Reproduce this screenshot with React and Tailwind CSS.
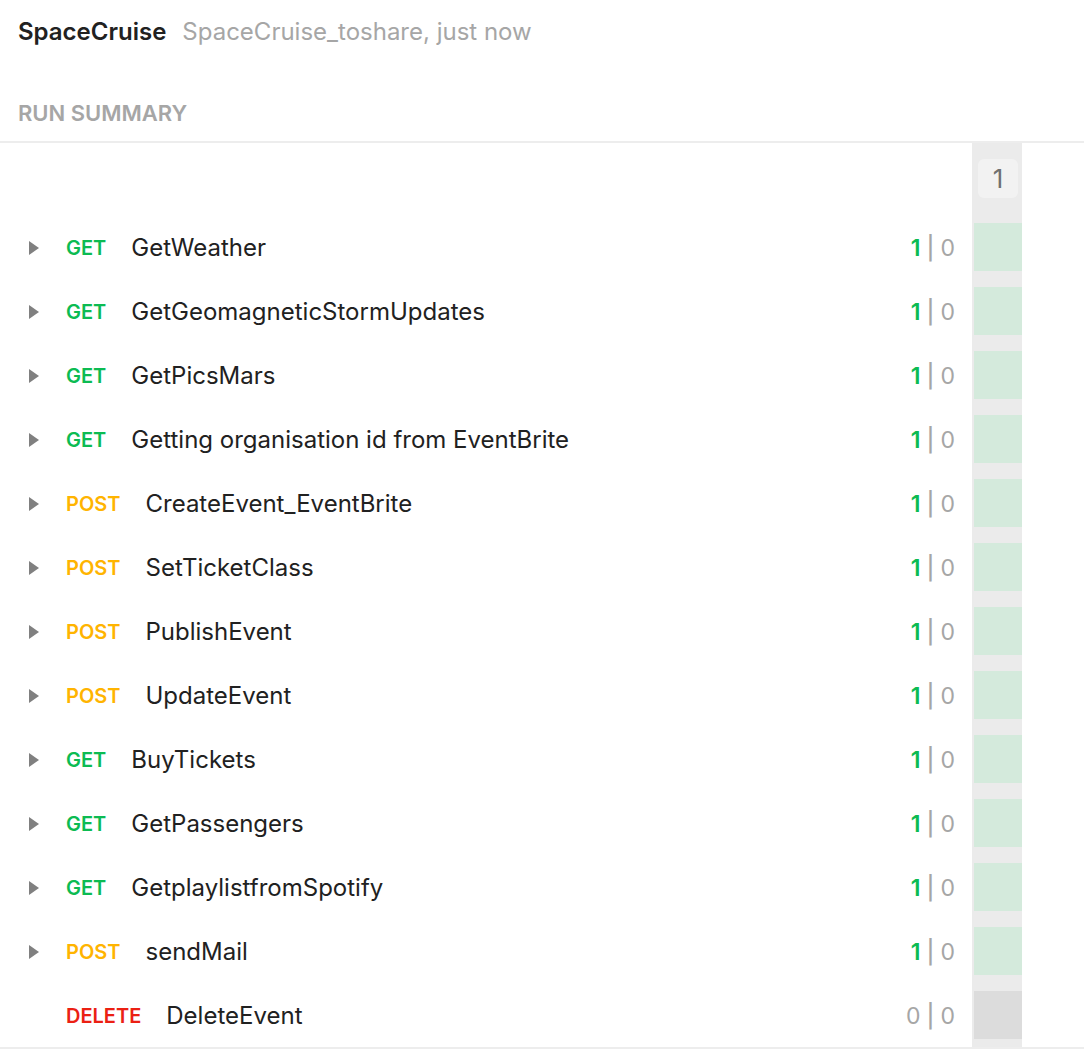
import React from 'react';

const requests = [
  { method: 'GET', name: 'GetWeather', pass: 1, fail: 0 },
  { method: 'GET', name: 'GetGeomagneticStormUpdates', pass: 1, fail: 0 },
  { method: 'GET', name: 'GetPicsMars', pass: 1, fail: 0 },
  { method: 'GET', name: 'Getting organisation id from EventBrite', pass: 1, fail: 0 },
  { method: 'POST', name: 'CreateEvent_EventBrite', pass: 1, fail: 0 },
  { method: 'POST', name: 'SetTicketClass', pass: 1, fail: 0 },
  { method: 'POST', name: 'PublishEvent', pass: 1, fail: 0 },
  { method: 'POST', name: 'UpdateEvent', pass: 1, fail: 0 },
  { method: 'GET', name: 'BuyTickets', pass: 1, fail: 0 },
  { method: 'GET', name: 'GetPassengers', pass: 1, fail: 0 },
  { method: 'GET', name: 'GetplaylistfromSpotify', pass: 1, fail: 0 },
  { method: 'POST', name: 'sendMail', pass: 1, fail: 0 },
  { method: 'DELETE', name: 'DeleteEvent', pass: 0, fail: 0, empty: true },
];

const methodColor = {
  GET: 'text-[#0cbb52]',
  POST: 'text-[#ffb400]',
  DELETE: 'text-[#eb2013]',
};

function Caret() {
  return (
    <svg width="10" height="14" viewBox="0 0 10 14" className="shrink-0">
      <path d="M0 0 L10 7 L0 14 Z" fill="#808080" />
    </svg>
  );
}

function RequestRow({ req }) {
  return (
    <div className="h-12 flex items-center pt-[2px]">
      <div className="w-[66px] pl-[29px] flex items-center">
        {!req.empty && <Caret />}
      </div>
      <span className={`text-[20px] font-semibold mr-[25px] ${methodColor[req.method]}`}>
        {req.method}
      </span>
      <span className="text-[24px] text-[#212121]">{req.name}</span>
      <div className="ml-auto pr-[17px] flex items-center text-[23px]">
        <span className={req.pass > 0 ? 'text-[#0cbb52] font-semibold' : 'text-[#a6a6a6]'}>
          {req.pass}
        </span>
        <span className="mx-[6px] text-[#a6a6a6] font-medium">|</span>
        <span className="text-[#a6a6a6]">{req.fail}</span>
      </div>
    </div>
  );
}

export default function App() {
  return (
    <div className="min-h-screen bg-white font-['Inter',sans-serif]">
      {/* Header */}
      <div className="px-[18px] pt-[14px]">
        <div className="flex items-baseline gap-4 h-8">
          <span className="text-[24px] font-semibold text-[#212121]">SpaceCruise</span>
          <span className="text-[24px] text-[#a6a6a6]">SpaceCruise_toshare, just now</span>
        </div>
        <div className="mt-[51px] h-[30px] text-[22px] font-semibold text-[#a6a6a6] uppercase">
          Run Summary
        </div>
      </div>

      {/* Summary table */}
      <div className="mt-[14px] border-t-2 border-b-2 border-[#ededed] flex">
        <div className="flex-1 pt-20 pb-2 flex flex-col gap-4">
          {requests.map((req) => (
            <RequestRow key={req.name} req={req} />
          ))}
        </div>
        <div className="w-[50px] bg-[#ebebeb] pb-2">
          <div className="h-20 pt-4 flex justify-center pl-[2px]">
            <div className="w-10 h-[39px] rounded-md bg-[#f2f2f2] text-[26px] text-[#707070] flex items-center justify-center">
              1
            </div>
          </div>
          <div className="flex flex-col gap-4 pl-[2px]">
            {requests.map((req) => (
              <div
                key={req.name}
                className={req.empty ? 'h-12 bg-[#dcdcdc]' : 'h-12 bg-[#d4eadc]'}
              />
            ))}
          </div>
        </div>
        <div className="w-[62px]" />
      </div>
    </div>
  );
}
